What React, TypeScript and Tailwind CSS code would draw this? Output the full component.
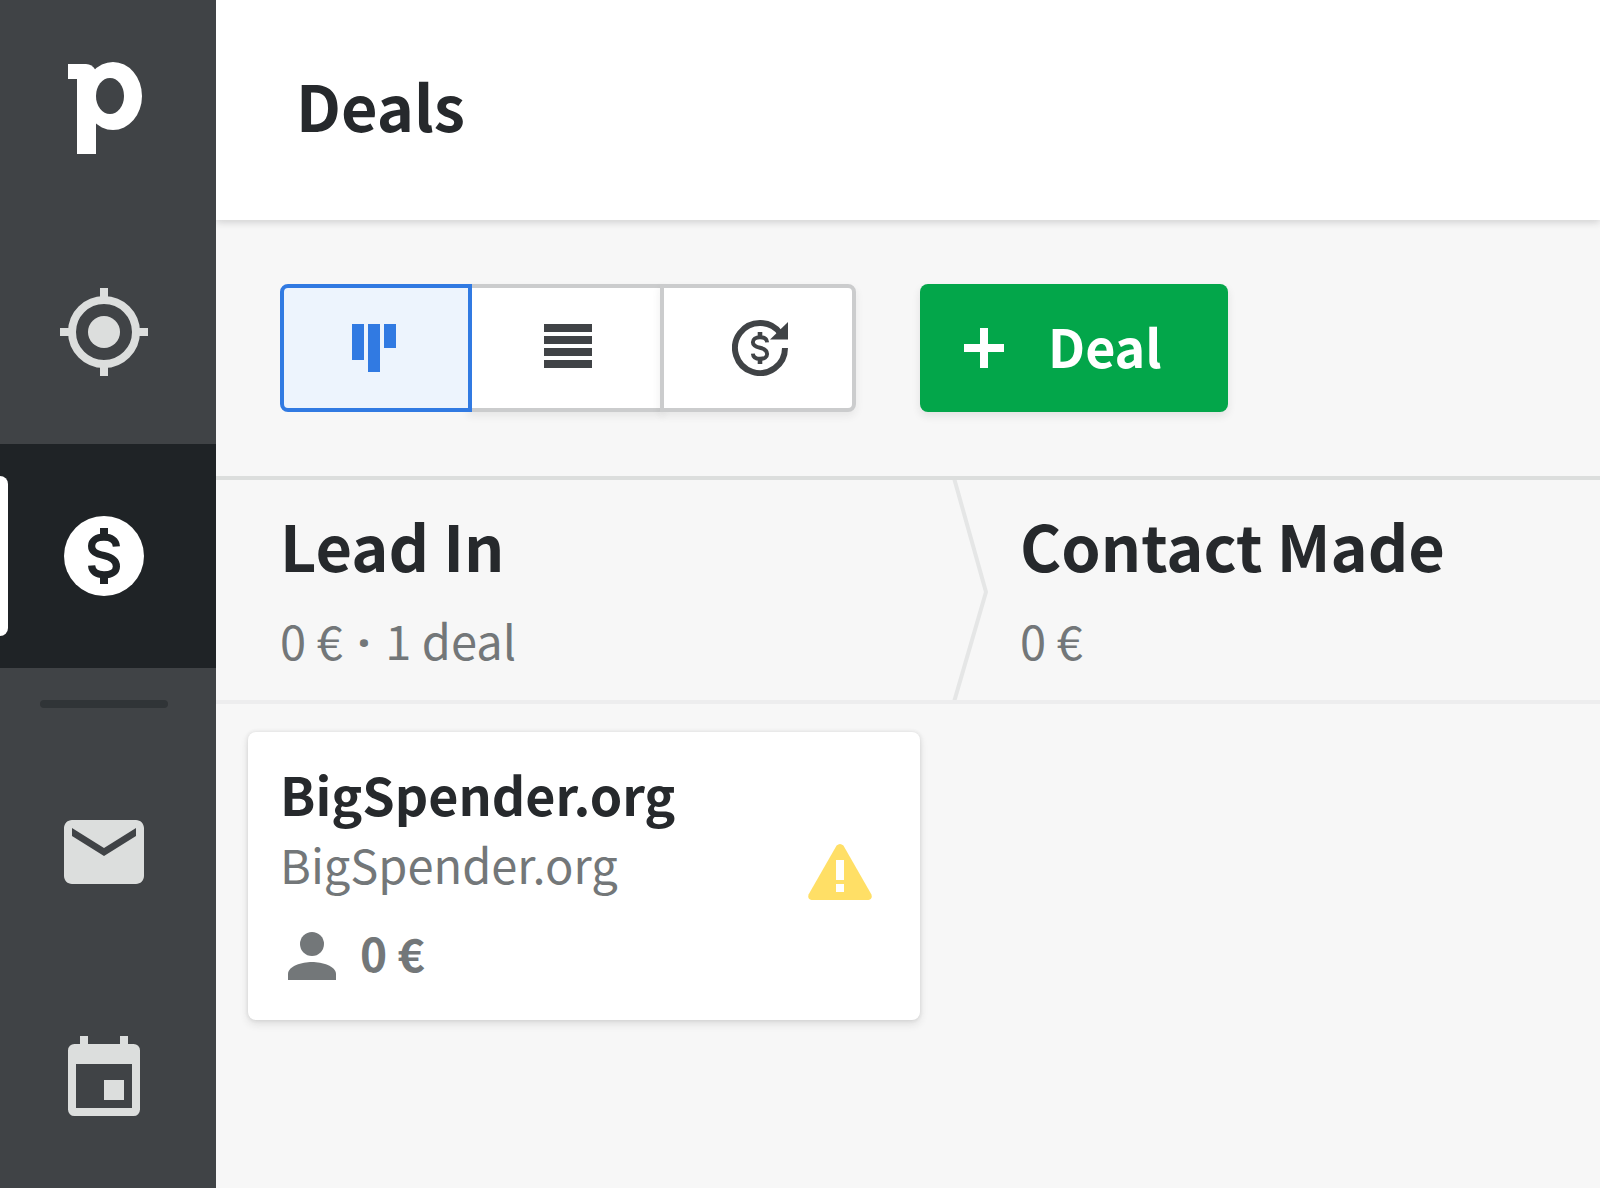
import React from 'react';

type IconProps = {
  className?: string;
};

type Deal = {
  title: string;
  organization: string;
  value: string;
};

type Stage = {
  name: string;
  value: string;
  deals: Deal[];
};

const stages: Stage[] = [
  {
    name: 'Lead In',
    value: '0 €',
    deals: [{ title: 'BigSpender.org', organization: 'BigSpender.org', value: '0 €' }],
  },
  { name: 'Contact Made', value: '0 €', deals: [] },
];

const DOLLAR_PATH =
  'M15.1 9.6C15 8.1 13.8 7.3 12 7.3C10.1 7.3 8.9 8.2 8.9 9.5C8.9 10.9 9.9 11.4 12 11.9C14.1 12.4 15.1 13.2 15.1 14.6C15.1 15.9 13.9 16.7 12 16.7C10.1 16.7 9 15.9 8.9 14.4';

const LogoIcon: React.FC<IconProps> = ({ className }) => (
  <svg viewBox="0 0 74 92" className={className} aria-hidden="true">
    <g fill="#fff">
      <path d="M0 2h18q6 0 9.500 6v9H0z" />
      <rect x="9" y="10" width="19" height="82" />
      <ellipse cx="45" cy="34" rx="29" ry="34" />
    </g>
    <ellipse cx="42" cy="34" rx="14" ry="18" fill="#404346" />
  </svg>
);

const TargetIcon: React.FC<IconProps> = ({ className }) => (
  <svg viewBox="0 0 24 24" fill="none" stroke="currentColor" strokeWidth="2" className={className} aria-hidden="true">
    <circle cx="12" cy="12" r="8" />
    <circle cx="12" cy="12" r="4" fill="currentColor" stroke="none" />
    <path d="M12 1v3M12 20v3M1 12h3M20 12h3" />
  </svg>
);

const DealsIcon: React.FC<IconProps> = ({ className }) => (
  <svg viewBox="0 0 24 24" fill="none" className={className} aria-hidden="true">
    <circle cx="12" cy="12" r="10" fill="currentColor" />
    <path d={DOLLAR_PATH} stroke="#1f2326" strokeWidth="1.8" />
    <path d="M12 5v2.2M12 16.8V19" stroke="#1f2326" strokeWidth="2" />
  </svg>
);

const MailIcon: React.FC<IconProps> = ({ className }) => (
  <svg viewBox="0 0 24 24" fill="currentColor" className={className} aria-hidden="true">
    <path d="M20 4H4c-1.1 0-2 .9-2 2v12c0 1.1.9 2 2 2h16c1.1 0 2-.9 2-2V6c0-1.1-.9-2-2-2zm0 4l-8 5-8-5V6l8 5 8-5z" />
  </svg>
);

const CalendarIcon: React.FC<IconProps> = ({ className }) => (
  <svg viewBox="0 0 24 24" fill="currentColor" className={className} aria-hidden="true">
    <path
      fillRule="evenodd"
      d="M6 2h2v2h8V2h2v2h1.4A1.6 1.6 0 0 1 21 5.6V20.4A1.6 1.6 0 0 1 19.4 22H4.6A1.6 1.6 0 0 1 3 20.4V5.6A1.6 1.6 0 0 1 4.6 4H6zM5 9v11h14V9z"
    />
    <path d="M12 13h5v5h-5z" />
  </svg>
);

const PipelineIcon: React.FC<IconProps> = ({ className }) => (
  <svg viewBox="0 0 48 48" fill="currentColor" className={className} aria-hidden="true">
    <path d="M0 0h12v36H0zM16 0h12v48H16zM32 0h12v24H32z" />
  </svg>
);

const ListIcon: React.FC<IconProps> = ({ className }) => (
  <svg viewBox="0 0 48 48" fill="currentColor" className={className} aria-hidden="true">
    <path d="M0 0h48v8H0zM0 12h48v8H0zM0 24h48v8H0zM0 36h48v8H0z" />
  </svg>
);

const ForecastIcon: React.FC<IconProps> = ({ className }) => (
  <svg viewBox="0 0 56 56" fill="none" stroke="currentColor" className={className} aria-hidden="true">
    <path d="M53 28A25 25 0 1 1 48.5 13.7" strokeWidth="6" />
    <path d="M56 2v17.500H38z" fill="currentColor" stroke="none" />
    <g transform="translate(28 28) scale(2.3) translate(-12 -12)">
      <path d={DOLLAR_PATH} strokeWidth="1.7" />
      <path d="M12 5v2.2M12 16.8V19" strokeWidth="2" />
    </g>
  </svg>
);

const PlusIcon: React.FC<IconProps> = ({ className }) => (
  <svg viewBox="0 0 40 40" fill="currentColor" className={className} aria-hidden="true">
    <path d="M16 0h8v16h16v8H24v16h-8V24H0v-8h16z" />
  </svg>
);

const WarningIcon: React.FC<IconProps> = ({ className }) => (
  <svg viewBox="0 0 64 64" className={className} role="img" aria-label="No activity scheduled">
    <path
      d="M28.6 1.6Q32-1.600 35.4 1.6L63.3 50.3Q65 55 60.5 56H3.5Q-1 55 .7 50.3z"
      fill="#ffdf66"
    />
    <path d="M28 16h8v20h-8zM28 40h8v8h-8z" fill="#fff" />
  </svg>
);

const PersonIcon: React.FC<IconProps> = ({ className }) => (
  <svg viewBox="0 0 48 48" fill="currentColor" className={className} aria-hidden="true">
    <circle cx="24" cy="12" r="12" />
    <path d="M0 48v-6c0-8 14-12 24-12s24 4 24 12v6z" />
  </svg>
);

const NavItem: React.FC<{ label: string; active?: boolean; children: React.ReactNode }> = ({
  label,
  active,
  children,
}) => (
  <a
    href="#"
    aria-label={label}
    className={`flex h-56 items-center ${active ? 'bg-[#1f2326] text-white' : 'text-[#dcdedd]'}`}
  >
    <span className={`h-40 w-2 rounded-r-lg ${active ? 'bg-white' : ''}`} />
    <span className="ml-12">{children}</span>
  </a>
);

const Sidebar: React.FC = () => (
  <nav className="w-54 shrink-0 bg-[#404346]">
    <a href="#" aria-label="Home" className="flex h-55 items-start pt-[62px] pl-17">
      <LogoIcon className="h-23" />
    </a>
    <NavItem label="Leads">
      <TargetIcon className="size-24" />
    </NavItem>
    <NavItem label="Deals" active>
      <DealsIcon className="size-24" />
    </NavItem>
    <div className="my-8 ml-10 h-2 w-32 rounded bg-[#303437]" />
    <NavItem label="Mail">
      <MailIcon className="size-24" />
    </NavItem>
    <NavItem label="Activities">
      <CalendarIcon className="size-24" />
    </NavItem>
  </nav>
);

const Toolbar: React.FC = () => (
  <div className="flex gap-16 px-16 py-16">
    <div className="flex text-[#404346]">
      <button
        type="button"
        aria-label="Pipeline view"
        aria-pressed="true"
        className="z-10 flex h-32 w-48 items-center justify-center rounded-l-lg border-4 border-[#317ae2] bg-[#edf4fd] text-[#317ae2]"
      >
        <PipelineIcon className="size-12" />
      </button>
      <button
        type="button"
        aria-label="List view"
        className="-ml-1 flex h-32 w-49 items-center justify-center border-4 border-[#cbcccd] bg-white pl-1 shadow-[0_4px_8px_rgba(38,41,44,0.08)]"
      >
        <ListIcon className="size-12" />
      </button>
      <button
        type="button"
        aria-label="Forecast view"
        className="-ml-1 flex h-32 w-49 items-center justify-center rounded-r-lg border-4 border-[#cbcccd] bg-white pl-1 shadow-[0_4px_8px_rgba(38,41,44,0.08)]"
      >
        <ForecastIcon className="size-14" />
      </button>
    </div>
    <button
      type="button"
      className="flex h-32 items-center rounded-lg bg-[#03a64a] pr-[66px] pl-11 text-[52px] leading-[64px] font-bold text-white shadow-[0_4px_8px_rgba(38,41,44,0.1)]"
    >
      <PlusIcon className="mr-11 size-10" />
      <span className="pb-1">Deal</span>
    </button>
  </div>
);

const DealCard: React.FC<{ deal: Deal }> = ({ deal }) => (
  <article className="flex items-center rounded-lg bg-white pt-7 pr-12 pb-10 pl-8 shadow-[0_0_4px_rgba(38,41,44,0.12),0_4px_8px_rgba(38,41,44,0.12)]">
    <div className="flex-1">
      <h3 className="text-[52px] leading-[68px] font-bold text-[#26292c]">{deal.title}</h3>
      <p className="mt-2 text-[47px] leading-[56px]">{deal.organization}</p>
      <div className="mt-8 flex items-end">
        <PersonIcon className="ml-2 size-12" />
        <span className="ml-6 text-[46px] leading-[56px] font-bold">{deal.value}</span>
      </div>
    </div>
    <WarningIcon className="mt-3 size-16" />
  </article>
);

const StageColumn: React.FC<{ stage: Stage; last: boolean }> = ({ stage, last }) => (
  <section className="w-[740px] shrink-0">
    <header className="flex h-56 justify-between border-b-4 border-[#ededee] pl-16">
      <div className="pt-8">
        <h2 className="text-[63px] leading-[66px] font-bold text-[#26292c]">{stage.name}</h2>
        <p className="mt-[38px] text-[47px] leading-[48px]">
          {stage.value}
          {stage.deals.length > 0 && (
            <>
              {' '}
              <span className="mx-1 font-['Open_Sans',sans-serif] font-bold">·</span> {stage.deals.length} deal
            </>
          )}
        </p>
      </div>
      {!last && (
        <svg viewBox="0 0 36 220" className="-mr-8 h-55 w-9" fill="none" stroke="#e5e6e6" strokeWidth="4" aria-hidden="true">
          <path d="M2 -2L34 112L2 222" />
        </svg>
      )}
    </header>
    <div className="flex flex-col gap-8 py-7 pr-9 pl-8">
      {stage.deals.map((deal) => (
        <DealCard key={deal.title} deal={deal} />
      ))}
    </div>
  </section>
);

const App: React.FC = () => {
  return (
    <div className="flex min-h-screen bg-[#f7f7f7] font-['Noto_Sans_CJK_SC',sans-serif] text-[#737779]">
      <Sidebar />
      <div className="flex min-w-0 flex-1 flex-col overflow-hidden">
        <header className="bg-white pt-17 pb-[78px] pl-20 shadow-[0_2px_8px_rgba(38,41,44,0.2)]">
          <h1 className="text-[63px] leading-[74px] font-bold text-[#26292c]">Deals</h1>
        </header>
        <Toolbar />
        <main className="flex flex-1 overflow-hidden border-t-4 border-[#dcdedd]">
          {stages.map((stage, index) => (
            <StageColumn key={stage.name} stage={stage} last={index === stages.length - 1} />
          ))}
        </main>
      </div>
    </div>
  );
};

export default App;
